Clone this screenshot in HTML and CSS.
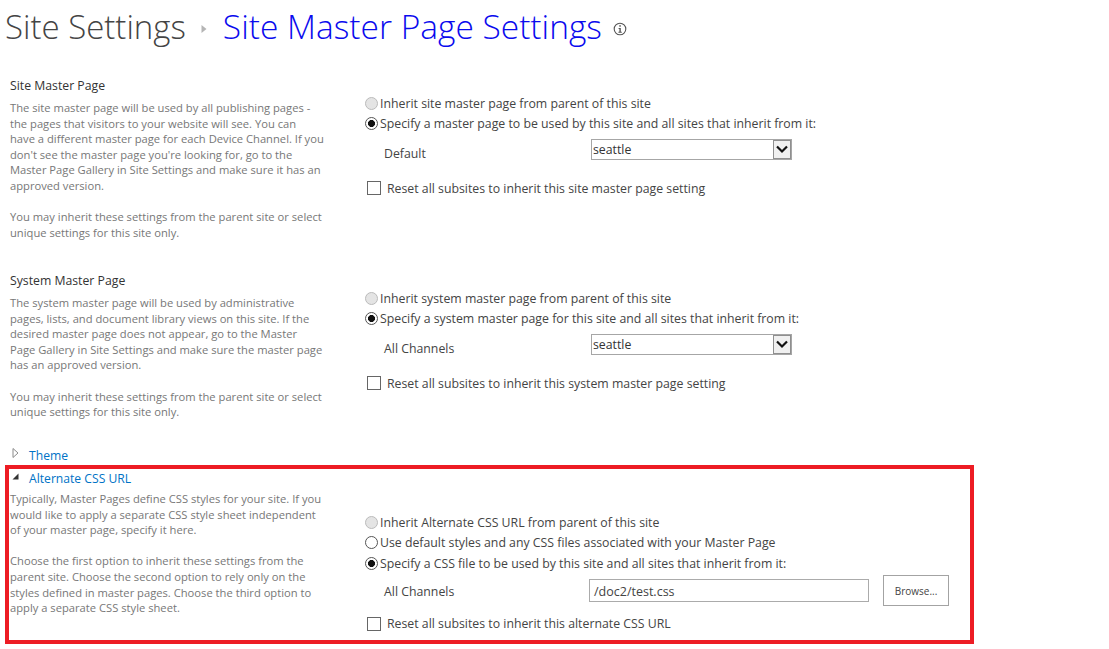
FILE: index.html
```html
<!DOCTYPE html>
<html lang="en">
<head>
  <meta charset="UTF-8">
  <title>Site Master Page Settings</title>
  <link rel="stylesheet" href="styles.css">
</head>
<body>
  <h1 class="page-title">
    <span class="crumb">Site Settings</span>
    <svg class="crumb-arrow" width="6" height="8" viewBox="0 0 6 8"><path d="M0.5 0 L5.5 4 L0.5 8 Z" fill="#b5b5b5"/></svg>
    <span class="current">Site Master Page Settings</span>
    <svg class="info-icon" width="14" height="14" viewBox="0 0 14 14"><circle cx="7" cy="7" r="5.8" fill="none" stroke="#555" stroke-width="1.1"/><rect x="6.3" y="3.2" width="1.5" height="1.5" fill="#555"/><path d="M5.6 6 H7.8 V9.8 H8.8 V10.8 H5.4 V9.8 H6.4 V7 H5.6 Z" fill="#555"/></svg>
  </h1>

  <section class="section master">
    <div class="info">
      <h2 class="section-title">Site Master Page</h2>
      <p class="desc">The site master page will be used by all publishing pages - the pages that visitors to your website will see. You can<br>have a different master page for each Device Channel. If you don't see the master page you're looking for, go to the Master Page Gallery in Site Settings and make sure it has an approved version.</p>
      <p class="desc">You may inherit these settings from the parent site or select unique settings for this site only.</p>
    </div>
    <div class="fields">
      <div class="option"><span class="radio disabled"></span>Inherit site master page from parent of this site</div>
      <div class="option"><span class="radio checked"></span>Specify a master page to be used by this site and all sites that inherit from it:</div>
      <div class="channel">
        <span class="channel-label">Default</span>
        <div class="select">seattle<span class="select-btn"><svg width="14" height="9" viewBox="0 0 14 9"><path d="M2 1.5 L7 6.5 L12 1.5" fill="none" stroke="#111" stroke-width="2.2"/></svg></span></div>
      </div>
      <div class="reset"><span class="check"></span>Reset all subsites to inherit this site master page setting</div>
    </div>
  </section>

  <section class="section master">
    <div class="info">
      <h2 class="section-title">System Master Page</h2>
      <p class="desc">The system master page will be used by administrative pages, lists, and document library views on this site. If the desired master page does not appear, go to the Master Page Gallery in Site Settings and make sure the master page has an approved version.</p>
      <p class="desc">You may inherit these settings from the parent site or select unique settings for this site only.</p>
    </div>
    <div class="fields">
      <div class="option"><span class="radio disabled"></span>Inherit system master page from parent of this site</div>
      <div class="option"><span class="radio checked"></span>Specify a system master page for this site and all sites that inherit from it:</div>
      <div class="channel">
        <span class="channel-label">All Channels</span>
        <div class="select">seattle<span class="select-btn"><svg width="14" height="9" viewBox="0 0 14 9"><path d="M2 1.5 L7 6.5 L12 1.5" fill="none" stroke="#111" stroke-width="2.2"/></svg></span></div>
      </div>
      <div class="reset"><span class="check"></span>Reset all subsites to inherit this system master page setting</div>
    </div>
  </section>

  <div class="expander theme">
    <svg width="7" height="10" viewBox="0 0 7 10"><path d="M1 0.5 L6 5 L1 9.5 Z" fill="#fff" stroke="#8a8a8a"/></svg>
    <a href="#" class="expander-link">Theme</a>
  </div>

  <div class="highlight">
    <div class="expander open">
      <svg width="7" height="7" viewBox="0 0 7 7"><path d="M6.5 0.5 V6.5 H0.5 Z" fill="#333"/></svg>
      <a href="#" class="expander-link">Alternate CSS URL</a>
    </div>
    <section class="section alt">
      <div class="info">
        <p class="desc">Typically, Master Pages define CSS styles for your site. If you would like to apply a separate CSS style sheet independent of your master page, specify it here.</p>
        <p class="desc">Choose the first option to inherit these settings from the parent site. Choose the second option to rely only on the styles defined in master pages. Choose the third option to apply a separate CSS style sheet.</p>
      </div>
      <div class="fields">
        <div class="option"><span class="radio disabled"></span>Inherit Alternate CSS URL from parent of this site</div>
        <div class="option"><span class="radio"></span>Use default styles and any CSS files associated with your Master Page</div>
        <div class="option"><span class="radio checked"></span>Specify a CSS file to be used by this site and all sites that inherit from it:</div>
        <div class="channel url-row">
          <span class="channel-label">All Channels</span>
          <div class="text-input">/doc2/test.css</div>
          <button class="browse">Browse...</button>
        </div>
        <div class="reset"><span class="check"></span>Reset all subsites to inherit this alternate CSS URL</div>
      </div>
    </section>
  </div>
</body>
</html>
```

FILE: styles.css
```css
* {
  box-sizing: border-box;
}

body {
  margin: 0;
  padding: 0;
  background-color: #fff;
  color: #444;
  font-family: 'Open Sans', 'Noto Sans', sans-serif;
  font-size: 12.3px;
  overflow: hidden;
}

.page-title {
  display: flex;
  align-items: center;
  height: 52px;
  margin: 0;
  padding-left: 5px;
  font-size: 33px;
  font-weight: 300;
  white-space: nowrap;
}

.crumb {
  color: #444;
}

.crumb-arrow {
  margin: 6px 16px 0 15px;
}

.current {
  color: #0a0aee;
  font-size: 33.5px;
}

.info-icon {
  margin: 6px 0 0 11px;
}

.section {
  display: grid;
  grid-template-columns: 354px 1fr;
  padding-left: 10px;
}

.master {
  height: 195px;
  padding-top: 25px;
}

.section-title {
  margin: 0 0 5px;
  color: #333;
  font-size: 12.25px;
  font-weight: 400;
  line-height: 18px;
}

.desc {
  width: 314px;
  margin: 0 0 15.6px;
  color: #777;
  font-size: 11.2px;
  line-height: 15.6px;
}

.fields {
  padding-top: 16px;
}

.option {
  display: flex;
  align-items: center;
  height: 20.5px;
  color: #444;
  white-space: nowrap;
}

.radio {
  width: 13px;
  height: 13px;
  margin: 0 2px 0 1px;
  background-color: #fff;
  border: 1px solid #555;
  border-radius: 50%;
}

.radio.disabled {
  background-color: #e4e4e4;
  border-color: #bbb;
}

.radio.checked {
  background: radial-gradient(circle, #111 0, #111 3.2px, #fff 3.8px);
}

.channel {
  display: flex;
  align-items: center;
  height: 22px;
  margin-top: 4px;
  padding-left: 20px;
}

.channel-label {
  width: 207px;
  padding-top: 9px;
}

.select {
  display: flex;
  justify-content: space-between;
  align-items: center;
  width: 201px;
  height: 21px;
  padding-left: 1px;
  color: #333;
  border: 1px solid #a6a6a6;
}

.select-btn {
  display: flex;
  justify-content: center;
  align-items: center;
  width: 18px;
  height: 19px;
  background-color: #f0f0f0;
  border: 1px solid #8f8f8f;
}

.reset {
  display: flex;
  align-items: center;
  height: 18px;
  margin-top: 19px;
  padding-left: 3px;
  white-space: nowrap;
}

.check {
  width: 14px;
  height: 14px;
  margin-right: 6px;
  background-color: #fff;
  border: 1px solid #666;
}

.expander {
  display: flex;
  align-items: center;
  gap: 10px;
  height: 20px;
  padding-left: 12px;
}

.expander svg {
  margin-top: -4px;
}

.theme {
  margin-top: 3px;
}

.expander-link {
  color: #0072c6;
  font-size: 12.15px;
  text-decoration: none;
}

.highlight {
  width: 969px;
  height: 179px;
  margin: 0 0 0 5px;
  padding-left: 1px;
  border: 4px solid #ed1c24;
}

.open {
  height: 18px;
  margin-bottom: 4px;
  padding-left: 2px;
}

.alt {
  padding-left: 0;
}

.alt .fields {
  padding-top: 21px;
}

.url-row {
  height: 32px;
  margin-top: 1px;
}

.url-row .channel-label {
  width: 205px;
  padding-top: 2px;
}

.text-input {
  display: flex;
  align-items: center;
  width: 280px;
  height: 23px;
  padding: 1px 0 0 4px;
  color: #444;
  font-size: 12.5px;
  border: 1px solid #ababab;
}

.browse {
  width: 66px;
  height: 31px;
  margin-left: 14px;
  padding: 0;
  color: #444;
  background-color: #fff;
  border: 1px solid #a3a3a3;
  font-family: inherit;
  font-size: 10px;
}

.url-row + .reset {
  margin-top: 8px;
}
```
